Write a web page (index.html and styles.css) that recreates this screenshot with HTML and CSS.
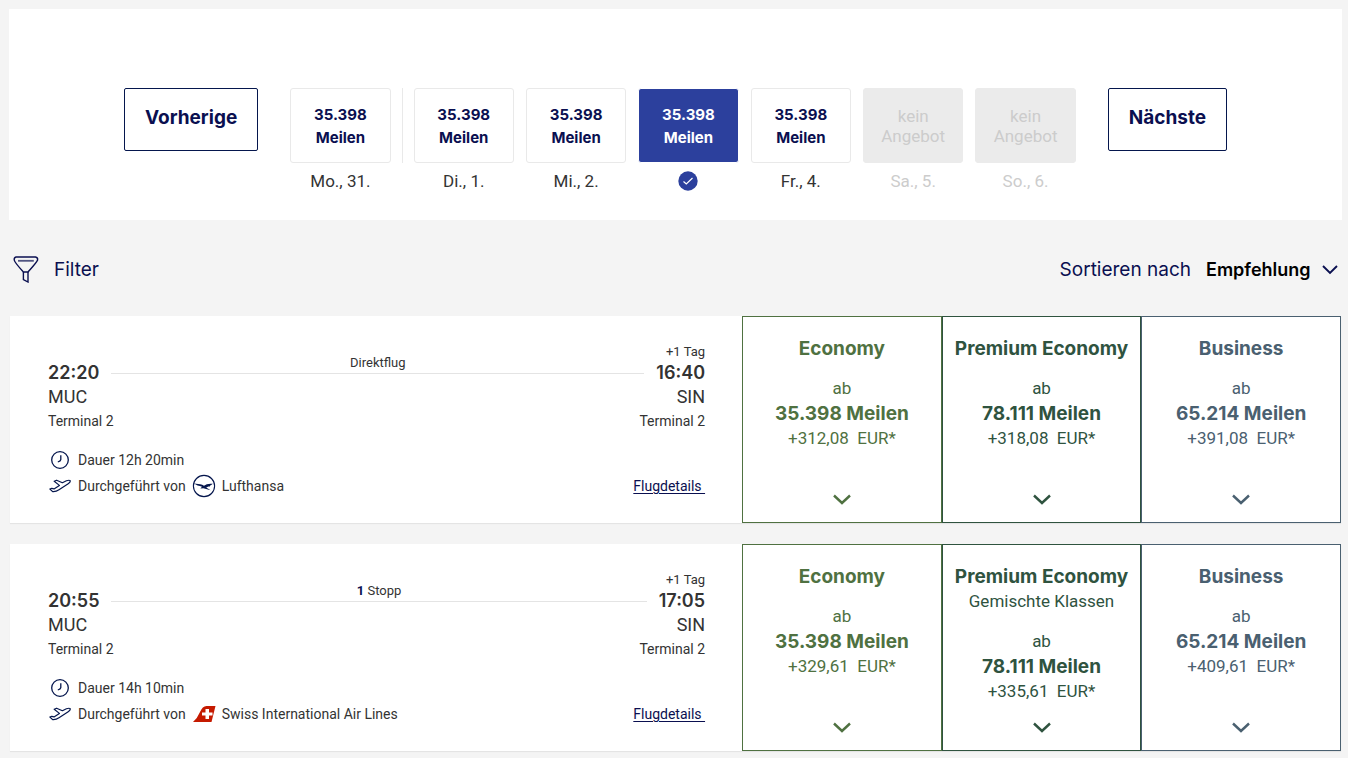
FILE: index.html
```html
<!DOCTYPE html>
<html lang="de">
<head>
  <meta charset="UTF-8">
  <meta name="viewport" content="width=device-width, initial-scale=1.0">
  <title>Flugauswahl</title>
  <link rel="stylesheet" href="styles.css">
</head>
<body>
  <!-- Shared icons -->
  <svg class="sprite" aria-hidden="true">
    <symbol id="chevron" viewBox="0 0 18 11">
      <path d="M1 1.5 L9 9 L17 1.5" fill="none" stroke="currentColor" stroke-width="2.4"/>
    </symbol>
    <symbol id="clock" viewBox="0 0 18 18">
      <circle cx="9" cy="9" r="8.3" fill="none" stroke="currentColor" stroke-width="1.3"/>
      <path d="M9.8 4.2 V8.6 Q9.6 10.2 6.8 11" fill="none" stroke="currentColor" stroke-width="1.3"/>
    </symbol>
    <symbol id="plane" viewBox="0 0 22 14">
      <path d="M5.2 2.2 L7.6 1.2 L13.4 3.7 L17.4 1.8 Q20.4 0.7 21.2 1.7 Q21.6 3.2 19.2 4.7 L10 10.8 Q7 12.9 3.6 12.6 L0.9 10 L2.8 9.3 L5 9.9 L10.4 6.4 Z" fill="none" stroke="currentColor" stroke-width="1.2" stroke-linejoin="round"/>
    </symbol>
  </svg>

  <main class="page">
    <section class="calendar">
      <button class="nav-btn" type="button">Vorherige</button>
      <div class="days">
        <div class="day">
          <button class="day-btn" type="button">35.398<br>Meilen</button>
          <span class="day-label">Mo., 31.</span>
        </div>
        <div class="month-line"></div>
        <div class="day">
          <button class="day-btn" type="button">35.398<br>Meilen</button>
          <span class="day-label">Di., 1.</span>
        </div>
        <div class="day">
          <button class="day-btn" type="button">35.398<br>Meilen</button>
          <span class="day-label">Mi., 2.</span>
        </div>
        <div class="day selected">
          <button class="day-btn" type="button" aria-pressed="true">35.398<br>Meilen</button>
          <span class="day-label">
            <svg class="check" viewBox="0 0 20 20" width="20" height="20">
              <circle cx="10" cy="10" r="9.7" fill="#2c409d"/>
              <path d="M5.5 10.5 L8.3 13 L14.5 7" fill="none" stroke="#fff" stroke-width="1.2"/>
            </svg>
          </span>
        </div>
        <div class="day">
          <button class="day-btn" type="button">35.398<br>Meilen</button>
          <span class="day-label">Fr., 4.</span>
        </div>
        <div class="day empty">
          <button class="day-btn" type="button" disabled>kein<br>Angebot</button>
          <span class="day-label">Sa., 5.</span>
        </div>
        <div class="day empty">
          <button class="day-btn" type="button" disabled>kein<br>Angebot</button>
          <span class="day-label">So., 6.</span>
        </div>
      </div>
      <button class="nav-btn" type="button">Nächste</button>
    </section>

    <div class="toolbar">
      <button class="filter-btn" type="button">
        <svg viewBox="0 0 26 28" width="26" height="28" fill="none" stroke="currentColor">
          <path d="M3 2 H22.5 Q25 2.4 24.6 5 Q24 7 15 17 H10.4 Q1.6 7.4 1.2 5 Q1 2.4 3 2 Z" stroke-width="1.4"/>
          <path d="M5 5.8 H20.8" stroke-width="1.8" opacity=".7"/>
          <path d="M10.4 17 V24.6 L15 27 V17" stroke-width="1.4"/>
        </svg>
        Filter
      </button>
      <div class="sort">
        <label for="sort">Sortieren nach</label>
        <div class="sort-field">
          <select id="sort">
            <option>Empfehlung</option>
          </select>
          <svg class="sort-arrow" viewBox="0 0 16 10" width="16" height="10">
            <path d="M1 1 L8 8 L15 1" fill="none" stroke="currentColor" stroke-width="1.9"/>
          </svg>
        </div>
      </div>
    </div>

    <article class="flight">
      <div class="info">
        <div class="route">
          <span class="time">22:20</span>
          <span class="stops">Direktflug</span>
          <div class="arrival">
            <span class="plus-day">+1 Tag</span>
            <span class="time">16:40</span>
          </div>
        </div>
        <div class="places airport"><span>MUC</span><span>SIN</span></div>
        <div class="places"><span>Terminal 2</span><span>Terminal 2</span></div>
        <div class="details">
          <div class="detail">
            <span class="icon"><svg width="18" height="18"><use href="#clock"/></svg></span>
            <span>Dauer 12h 20min</span>
          </div>
          <div class="detail">
            <span class="icon"><svg width="22" height="14"><use href="#plane"/></svg></span>
            <span>Durchgeführt von</span>
            <svg class="airline" viewBox="0 0 24 24" width="24" height="24">
              <circle cx="12" cy="12" r="10.6" fill="none" stroke="#05164d" stroke-width="1.1"/>
              <path d="M2 9.6 L8.2 10.2 Q10.4 10.3 12 11.8 Q14.8 9.2 20.8 9.8 L19.2 11 L18.2 11.4 L17.8 12.4 L16.4 12.6 L14.2 13.6 L18.6 16.2 L11.4 14.2 L8.4 14.4 L10 12.8 Q8 11.6 5.6 11.4 Z" fill="#05164d"/>
            </svg>
            <span>Lufthansa</span>
            <a class="more" href="#">Flugdetails&nbsp;</a>
          </div>
        </div>
      </div>
      <div class="fares">
        <button class="fare economy" type="button">
          <span class="fare-name">Economy</span>
          <span class="from">ab</span>
          <span class="miles">35.398 Meilen</span>
          <span class="tax">+312,08 &nbsp;EUR*</span>
          <svg class="open" width="18" height="11"><use href="#chevron"/></svg>
        </button>
        <button class="fare premium" type="button">
          <span class="fare-name">Premium Economy</span>
          <span class="from">ab</span>
          <span class="miles">78.111 Meilen</span>
          <span class="tax">+318,08 &nbsp;EUR*</span>
          <svg class="open" width="18" height="11"><use href="#chevron"/></svg>
        </button>
        <button class="fare business" type="button">
          <span class="fare-name">Business</span>
          <span class="from">ab</span>
          <span class="miles">65.214 Meilen</span>
          <span class="tax">+391,08 &nbsp;EUR*</span>
          <svg class="open" width="18" height="11"><use href="#chevron"/></svg>
        </button>
      </div>
    </article>

    <article class="flight">
      <div class="info">
        <div class="route">
          <span class="time">20:55</span>
          <span class="stops"><b>1</b> Stopp</span>
          <div class="arrival">
            <span class="plus-day">+1 Tag</span>
            <span class="time">17:05</span>
          </div>
        </div>
        <div class="places airport"><span>MUC</span><span>SIN</span></div>
        <div class="places"><span>Terminal 2</span><span>Terminal 2</span></div>
        <div class="details">
          <div class="detail">
            <span class="icon"><svg width="18" height="18"><use href="#clock"/></svg></span>
            <span>Dauer 14h 10min</span>
          </div>
          <div class="detail">
            <span class="icon"><svg width="22" height="14"><use href="#plane"/></svg></span>
            <span>Durchgeführt von</span>
            <svg class="airline" viewBox="0 0 24 24" width="24" height="24">
              <path d="M1 20 Q5.500 16 8 10 Q10.500 4 14.500 4 H23.500 L19.500 20 Z" fill="#c51a00"/>
              <path d="M13.500 7 H17 V10.500 H20.500 V13.500 H17 V17 H13.500 V13.500 H10 V10.500 H13.500 Z" fill="#fff"/>
            </svg>
            <span>Swiss International Air Lines</span>
            <a class="more" href="#">Flugdetails&nbsp;</a>
          </div>
        </div>
      </div>
      <div class="fares">
        <button class="fare economy" type="button">
          <span class="fare-name">Economy</span>
          <span class="from">ab</span>
          <span class="miles">35.398 Meilen</span>
          <span class="tax">+329,61 &nbsp;EUR*</span>
          <svg class="open" width="18" height="11"><use href="#chevron"/></svg>
        </button>
        <button class="fare premium" type="button">
          <span class="fare-name">Premium Economy</span>
          <span class="mixed">Gemischte Klassen</span>
          <span class="from">ab</span>
          <span class="miles">78.111 Meilen</span>
          <span class="tax">+335,61 &nbsp;EUR*</span>
          <svg class="open" width="18" height="11"><use href="#chevron"/></svg>
        </button>
        <button class="fare business" type="button">
          <span class="fare-name">Business</span>
          <span class="from">ab</span>
          <span class="miles">65.214 Meilen</span>
          <span class="tax">+409,61 &nbsp;EUR*</span>
          <svg class="open" width="18" height="11"><use href="#chevron"/></svg>
        </button>
      </div>
    </article>
  </main>
</body>
</html>
```

FILE: styles.css
```css
* {
  box-sizing: border-box;
}
body {
  margin: 0;
  background-color: #f4f4f4;
  color: #333;
  font-family: Roboto, "Liberation Sans", sans-serif;
  font-size: 14px;
}
button, select {
  font-family: inherit;
  margin: 0;
}
svg {
  display: block;
}
.sprite {
  display: none;
}
.page {
  padding: 9px 6px 6px 9px;
}

/* Date strip */
.calendar {
  display: flex;
  align-items: flex-start;
  gap: 32px;
  padding: 79px 115px 24px;
  background-color: #fff;
}
.nav-btn {
  padding: 0 20px 4px;
  height: 63px;
  background-color: #fff;
  border: 1px solid #05164d;
  border-radius: 2px;
  color: #0a0f50;
  font-family: Inter, sans-serif;
  font-size: 19px;
  font-weight: 700;
}
.days {
  flex: 1;
  display: flex;
  gap: 12px;
}
.day {
  flex: 1;
  text-align: center;
}
.day-btn {
  display: block;
  width: 100%;
  height: 75px;
  padding: 0;
  background-color: #fff;
  border: 1px solid #e9e9e9;
  border-radius: 3px;
  color: #0a0f50;
  font-family: Inter, sans-serif;
  font-size: 15px;
  font-weight: 700;
  line-height: 23px;
}
.day-label {
  display: flex;
  justify-content: center;
  align-items: center;
  height: 30px;
  margin-top: 3px;
  font-size: 17px;
}
.month-line {
  width: 1px;
  height: 75px;
  margin: 0 -1px;
  background-color: #e9e9e9;
}
.selected .day-btn {
  background-color: #2c409d;
  border-color: #fff;
  color: #fff;
}
.empty .day-btn {
  background-color: #ebebeb;
  border-color: #ebebeb;
  color: #ccc;
  font-family: inherit;
  font-size: 17px;
  font-weight: 400;
  line-height: 20px;
}
.empty .day-label {
  color: #ccc;
}

/* Filter and sorting */
.toolbar {
  display: flex;
  justify-content: space-between;
  align-items: center;
  height: 96px;
  padding: 2px 5px 0 4px;
  color: #0a0f50;
  font-family: Inter, sans-serif;
  font-size: 19px;
}
.filter-btn {
  display: flex;
  align-items: center;
  gap: 15px;
  padding: 0;
  background: none;
  border: 0;
  color: inherit;
  font-size: 19px;
}
.sort {
  display: flex;
  align-items: center;
  gap: 15px;
}
.sort-field {
  position: relative;
}
.sort select {
  appearance: none;
  padding: 0 26px 0 0;
  background: none;
  border: 0;
  color: #000;
  font-size: 18px;
  font-weight: 600;
}
.sort-arrow {
  position: absolute;
  right: -1px;
  top: 7px;
  pointer-events: none;
}

/* Flight cards */
.flight {
  display: flex;
  margin: 0 1px 21px;
  background-color: #fff;
  box-shadow: 0 1px 1px #e4e4e4;
}
.info {
  flex: 1;
  padding: 27px 37px 24px 38px;
}
.route {
  display: flex;
  align-items: flex-end;
  gap: 12px;
}
.time {
  font-family: Inter, sans-serif;
  font-size: 18px;
  font-weight: 600;
  line-height: 24px;
}
.stops {
  flex: 1;
  margin-bottom: 11px;
  border-bottom: 1px solid #e4e4e4;
  line-height: 20px;
  text-align: center;
}
.stops b {
  color: #0a0f50;
}
.arrival {
  display: flex;
  flex-direction: column;
  align-items: flex-end;
}
.plus-day {
  line-height: 18px;
}
.stops, .plus-day {
  font-size: 13px;
}
.places {
  display: flex;
  justify-content: space-between;
  line-height: 24px;
}
.airport {
  font-size: 18px;
}
.details {
  margin-top: 14px;
}
.detail {
  display: flex;
  align-items: center;
  height: 26px;
}
.icon {
  display: flex;
  justify-content: center;
  width: 24px;
  margin-right: 6px;
  color: #05164d;
}
.airline {
  margin: 0 6px;
}
.more {
  margin-left: auto;
  color: #0a0f50;
  text-underline-offset: 2px;
}

/* Fare columns */
.fares {
  display: grid;
  grid-template-columns: repeat(3, 1fr);
  width: 45%;
}
.fare {
  display: flex;
  flex-direction: column;
  align-items: center;
  padding: 19px 0 17px;
  background-color: #fff;
  border: 1px solid currentColor;
  font-size: 17px;
  line-height: 25px;
}
.economy {
  color: #4f7141;
}
.premium {
  color: #2f533f;
}
.business {
  color: #4a6070;
}
.fare-name, .miles {
  font-family: Inter, sans-serif;
  font-size: 19px;
  font-weight: 700;
}
.from {
  margin-top: 15px;
}
.open {
  margin-top: auto;
}
```
